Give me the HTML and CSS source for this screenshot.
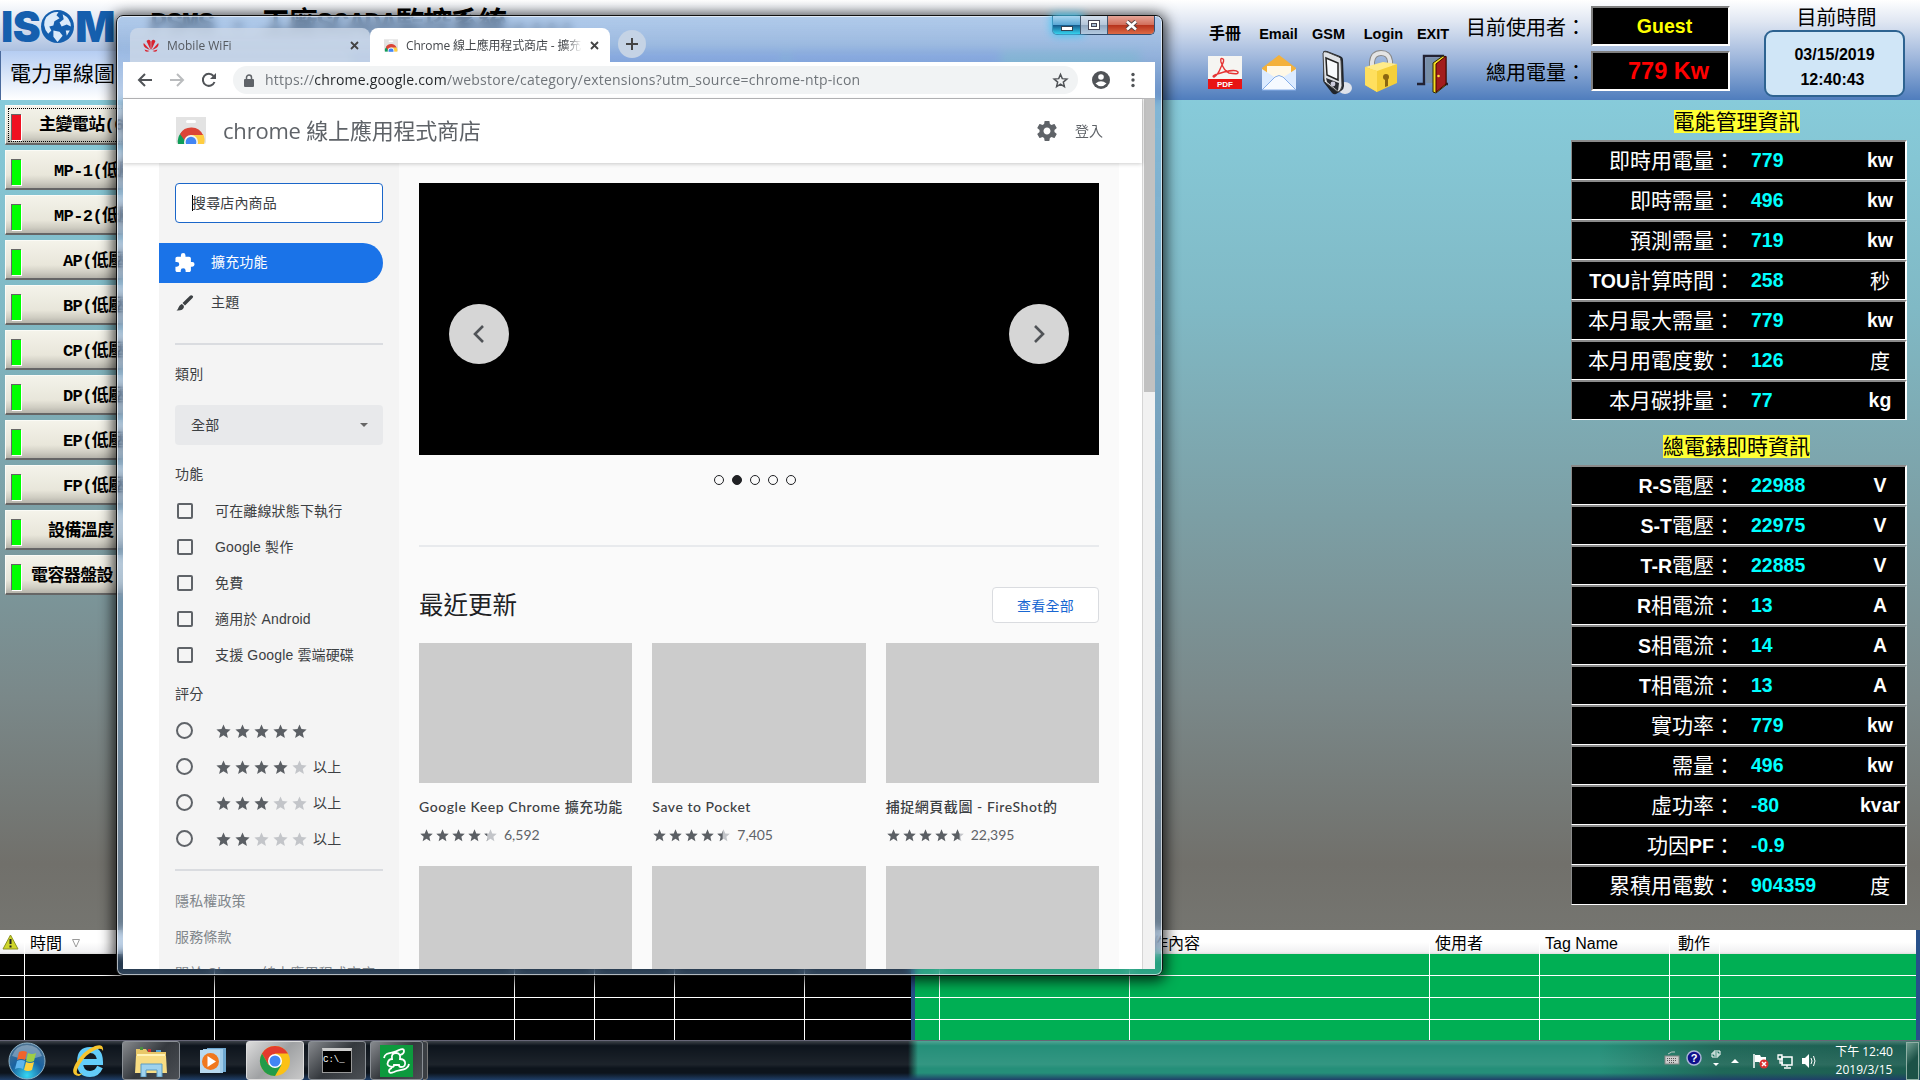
FILE: index.html
```html
<!DOCTYPE html>
<html lang="zh-Hant">
<head>
<meta charset="utf-8">
<title>PSMS - SCADA</title>
<link rel="stylesheet" href="styles.css">
</head>
<body>
<svg class="defs" width="0" height="0" aria-hidden="true">
  <symbol id="star" viewBox="0 0 24 24"><path d="M12 17.3 18.2 21l-1.6-7L22 9.2l-7.2-.6L12 2 9.2 8.6 2 9.2 7.5 14l-1.7 7z"/></symbol>
  <symbol id="webstore" viewBox="0 0 30 27">
    <path fill="#e3e3e3" d="M0 0h30v25a2 2 0 0 1-2 2H2a2 2 0 0 1-2-2z"/>
    <rect x="10" y="3" width="10" height="3" rx="1.5" fill="#fff"/>
    <path fill="#0f9d58" d="M2 27a13 13 0 0 1 4-12l7 12z"/>
    <path fill="#ffcd40" d="M15 17h12a13 13 0 0 1 1 10H15z"/>
    <path fill="#db4437" d="M4 17a13 13 0 0 1 23 1H15l-6 6z"/>
    <circle cx="15" cy="25" r="7" fill="#f1f1f1"/><circle cx="15" cy="25" r="5.3" fill="#4285f4"/>
    <path fill="#fff" d="M0 27h30v5H0z"/>
  </symbol>
</svg>
<div class="desktop">
  <header class="scada-head">
    <div class="brand">
      <div class="brand-top">
        <div class="logo"><span>IS</span>
          <svg width="35" height="35" viewBox="0 0 34 34"><circle cx="17" cy="17" r="16" fill="#155fae"/><path fill="#dcebfa" d="M6 8q6-6 12-5l-2 3 3 3-5 3-1 4-4 1 2 4-3 3Q1 16 6 8zM22 5q8 4 8 12l-4-2-5 2-2-4 4-3zM13 21l6 1 3 4-5 6-4-5zM25 21l4 0-3 5z"/></svg>
          <span>M</span></div>
        <div class="title">PSMS - 工廠SCADA監控系統<small>v1.0.0.2</small></div>
      </div>
      <div class="brand-nav"><span class="nav-on">電力單線圖</span><span class="nav-tab"></span><span class="nav-tab"></span><span class="nav-tab"></span></div>
    </div>
    <div class="tools">
      <div class="tool"><span>手冊</span>
        <svg width="36" height="46" viewBox="0 0 36 46"><rect x="1" y="6" width="34" height="33" fill="#f5f5f2"/><rect x="1" y="29" width="34" height="10" fill="#e81414"/><path d="M16 9q-3-2-2 3 3 9 8 11 10 2 9-1-2-3-14 0-14 4-10 5 4-2 7-10 4-7 2-8z" fill="none" stroke="#e63535" stroke-width="1.4"/><text x="18" y="37" text-anchor="middle" class="pdf">PDF</text></svg></div>
      <div class="tool"><span>Email</span>
        <svg width="36" height="46" viewBox="0 0 36 46"><path fill="#f3b13c" d="M1 18 18 5l17 13v6H1z"/><path fill="#fff8e6" d="M6 16h24v14H6z"/><path fill="#dcebff" d="M1 19l17 11 17-11v21H1z"/><path fill="#f6faff" stroke="#86aee8" d="M1 40l13-13q4-3 8 0l13 13z"/></svg></div>
      <div class="tool"><span>GSM</span>
        <svg class="phone" width="36" height="46" viewBox="0 0 36 46"><ellipse cx="28" cy="38" rx="7" ry="6" fill="#dfe3ea"/><path d="M6 2q1-2 4-1l13 5q3 1 3 4l1 26q0 3-3 5l-5 3q-2 1-4-1L8 34q-2-2-2-4z" fill="#20242a"/><path d="M6 3q1-2 4-1l12 5q2 1 2 4l1 25q-1 5-4 6L9 33q-2-1-2-4z" fill="#dfe2e6" stroke="#444"/><path d="m9 8 12 5v17L10 25z" fill="#f8fafc" stroke="#222" stroke-width="1.5"/><path d="m9 28 13 5-1 8-11-9z" fill="#2a2d33"/><circle cx="16" cy="34" r="2.4" fill="#ccd"/></svg></div>
      <div class="tool login"><span>Login</span>
        <svg width="36" height="46" viewBox="0 0 36 46"><path d="M9 20V12q1-9 9-9t9 8v6" fill="none" stroke="#888" stroke-width="6"/><path d="M9 20V12q1-9 9-9t9 8v6" fill="none" stroke="#e4e4e4" stroke-width="4"/><path d="M2 17 12 20 34 14V33L14 42 2 35z" fill="#f5cf3a"/><path d="M2 17 20 12l14 2-20 7z" fill="#ffeb8a"/><path d="m2 17 12 4v21L2 35z" fill="#ffdf5e"/><circle cx="23" cy="27" r="3" fill="#8a6510"/><path d="m22 28h3v8l-3 1z" fill="#8a6510"/></svg></div>
      <div class="tool"><span>EXIT</span>
        <svg width="36" height="46" viewBox="0 0 36 46"><path d="M2 34h7V6h19v28h5" fill="none" stroke="#223" stroke-width="2.4"/><path fill="#788fa8" d="M11 8h15v25H11z"/><path fill="#f3df24" stroke="#332a00" d="m18 13 10-7 3 1v28l-10 8-3-1z"/><path fill="#a31d1d" stroke="#400" d="m21 14 10-8v28l-10 8z"/><circle cx="23.500" cy="26" r="1.300" fill="#fd4"/></svg></div>
    </div>
    <div class="status">
      <div class="stat"><span class="cjk20">目前使用者：</span><b class="box guest">Guest</b></div>
      <div class="stat"><span class="cjk20">總用電量：</span><b class="box power">779 Kw</b></div>
    </div>
    <div class="clock"><span class="cjk20">目前時間</span><div class="clock-box"><b>03/15/2019</b><b>12:40:43</b></div></div>
  </header>

  <main class="scada-body">
    <nav class="stations">
      <button class="st alarm"><i></i><span style="margin-left:18px">主變電站(69</span></button>
      <button class="st"><i></i><span style="margin-left:33px">MP-1(低壓</span></button>
      <button class="st"><i></i><span style="margin-left:33px">MP-2(低壓</span></button>
      <button class="st"><i></i><span style="margin-left:42px">AP(低壓)</span></button>
      <button class="st"><i></i><span style="margin-left:42px">BP(低壓)</span></button>
      <button class="st"><i></i><span style="margin-left:42px">CP(低壓)</span></button>
      <button class="st"><i></i><span style="margin-left:42px">DP(低壓)</span></button>
      <button class="st"><i></i><span style="margin-left:42px">EP(低壓)</span></button>
      <button class="st"><i></i><span style="margin-left:42px">FP(低壓)</span></button>
      <button class="st"><i></i><span style="margin-left:27px">設備溫度</span></button>
      <button class="st"><i></i><span style="margin-left:10px">電容器盤設</span></button>
    </nav>
    <aside class="readings">
      <h2>電能管理資訊</h2>
      <div class="meter">
        <div class="row"><span>即時用電量：</span><b>779</b><em>kw</em></div>
        <div class="row"><span>即時需量：</span><b>496</b><em>kw</em></div>
        <div class="row"><span>預測需量：</span><b>719</b><em>kw</em></div>
        <div class="row"><span><b>TOU</b>計算時間：</span><b>258</b><em class="zh">秒</em></div>
        <div class="row"><span>本月最大需量：</span><b>779</b><em>kw</em></div>
        <div class="row"><span>本月用電度數：</span><b>126</b><em class="zh">度</em></div>
        <div class="row"><span>本月碳排量：</span><b>77</b><em>kg</em></div>
      </div>
      <h2>總電錶即時資訊</h2>
      <div class="meter">
        <div class="row"><span><b>R-S</b>電壓：</span><b>22988</b><em>V</em></div>
        <div class="row"><span><b>S-T</b>電壓：</span><b>22975</b><em>V</em></div>
        <div class="row"><span><b>T-R</b>電壓：</span><b>22885</b><em>V</em></div>
        <div class="row"><span><b>R</b>相電流：</span><b>13</b><em>A</em></div>
        <div class="row"><span><b>S</b>相電流：</span><b>14</b><em>A</em></div>
        <div class="row"><span><b>T</b>相電流：</span><b>13</b><em>A</em></div>
        <div class="row"><span>實功率：</span><b>779</b><em>kw</em></div>
        <div class="row"><span>需量：</span><b>496</b><em>kw</em></div>
        <div class="row"><span>虛功率：</span><b>-80</b><em>kvar</em></div>
        <div class="row"><span>功因<b>PF</b>：</span><b>-0.9</b><em></em></div>
        <div class="row"><span>累積用電數：</span><b>904359</b><em class="zh">度</em></div>
      </div>
    </aside>
  </main>

  <section class="logs">
    <div class="log alarms">
      <div><svg width="17" height="16" viewBox="0 0 17 16"><path d="M8.500 1 16 15H1z" fill="#cfd62a" stroke="#8d9422" stroke-linejoin="round"/><path d="M7.500 5h2v5h-2zM7.500 11.500h2v2h-2z" fill="#222"/></svg></div>
      <div>時間<svg class="sort" width="8" height="9" viewBox="0 0 8 9"><path d="M.5.500h7L4 8z" fill="#fff" stroke="#999"/></svg></div>
      <div></div><div></div><div></div><div></div><div></div>
    </div>
    <div class="log events">
      <div></div><div></div><div>操作內容</div><div>使用者</div><div>Tag Name</div><div>動作</div><div></div>
    </div>
  </section>

  <footer class="taskbar">
    <div class="launch">
      <div class="tb orb"><svg width="38" height="38" viewBox="0 0 38 38"><defs><radialGradient id="og" cx=".5" cy=".9" r=".9"><stop offset="0" stop-color="#35d6f2"/><stop offset=".5" stop-color="#1a62a0"/><stop offset="1" stop-color="#4d7290"/></radialGradient></defs><circle cx="19" cy="19" r="18" fill="url(#og)" stroke="#8fb4c9"/><path d="M4 14Q8 3 19 3t15 11q-15 6-30 0z" fill="#fff" opacity=".3"/><path fill="#f0642c" d="M11 10q4-2 8 0l-2 8q-4-2-8 0z"/><path fill="#9fce45" d="M20 11q4 2 8 0l-2 8q-4 2-8 0z"/><path fill="#5fb5ee" d="M9 19q4-2 8 0l-2 8q-4-2-8 0z"/><path fill="#ffd23e" d="M18 20q4 2 8 0l-2 8q-4 2-8 0z"/></svg></div>
      <div class="tb ie"><svg width="34" height="34" viewBox="0 0 34 34"><path d="M28 23q-3 7-10 7-10 0-10-12T18 6q10 0 10 12H9" fill="none" stroke="#63cdfa" stroke-width="6"/><path d="M7 32Q-3 31 4 19 11 7 23 2q9-3 8 5-1-4-8-1-9 4-15 14T7 30q2 0 4-1-2 2-4 3z" fill="#f6c42d"/></svg></div>
      <div class="tb btn"><svg width="34" height="32" viewBox="0 0 34 32"><path fill="#e9c868" d="M2 4h10l2 3h18v21H2z"/><path fill="#fff3b8" d="M3 9h28v18H3z"/><path fill="#f7dc83" d="M2 11h30l1 17H1z"/><path fill="#4b8e3f" d="M6 2h3v3H6z"/><path fill="#c33" d="M14 4h3v3h-3z"/><path fill="#57a7d8" d="M22 5h5v2h-5z"/><path d="M7 32V19h21v13h-5v-7H12v7z" fill="#9ed2ee" stroke="#5b9cc4"/></svg></div>
      <div class="tb"><svg width="28" height="28" viewBox="0 0 28 28"><path fill="#6ea7cf" d="M8 1h19v24H8z"/><path fill="#9fcbe8" d="M4 2h20v24H4z"/><path fill="#b9daef" d="M1 3h20v23H1z"/><circle cx="11.500" cy="14.500" r="8.500" fill="#f0781e"/><path fill="#fff" d="m8.500 9 8.500 5.500L8.500 20z"/></svg></div>
      <div class="tb btn on"><svg width="32" height="32" viewBox="0 0 32 32"><circle cx="16" cy="16" r="15" fill="#fbc116"/><path fill="#e33b2e" d="M3 8.500A15 15 0 0 1 29 8.500H16L9 16z"/><path fill="#e33b2e" d="M3 8.500 9.500 20 16 9z"/><path fill="#229b49" d="M3 8.500A15 15 0 0 0 16 31l6.500-11.300L9.500 20z"/><circle cx="16" cy="16" r="7" fill="#fff"/><circle cx="16" cy="16" r="5.500" fill="#4285f4"/></svg></div>
      <div class="tb btn"><div class="cmd">C:\_</div></div>
      <div class="tb btn green"><svg width="33" height="32" viewBox="0 0 33 32"><rect width="33" height="32" fill="#0d9a3d"/><path d="M4 13C5 6 14 9 19 5q5-2 5 1t-4 4M29 19c-1 7-10 5-15 8q-5 2-5-1 0-2 3-3M12 22q-6-1-4-5 1-3 4-3-1-6 4-6t4 6q4 0 5 3 1 5-4 5-2 0-2-2h-5q0 2-2 2z" fill="none" stroke="#fff" stroke-width="1.800"/></svg></div><span class="stack"></span>
    </div>
    <div class="tray">
      <svg width="16" height="16" viewBox="0 0 16 16"><path d="M4 4q4-3 7-2" stroke="#b9c9c4" fill="none"/><rect x="1" y="6" width="14" height="8" fill="#ccc" stroke="#888"/><path d="M3 8.500h10M3 10.500h10M5 12.500h6" stroke="#555" stroke-dasharray="1 1"/></svg>
      <svg width="16" height="16" viewBox="0 0 16 16"><circle cx="8" cy="8" r="7" fill="#10108c" stroke="#aab4d8" stroke-width="1.500"/><text x="8" y="12" text-anchor="middle" class="help">?</text></svg>
      <svg width="10" height="20" viewBox="0 0 10 20"><path d="M3 3h6v4H3zM1 5h6v4H1z" fill="#1f7360" stroke="#fff"/><path d="M2 15h6L5 18z" fill="#fff"/></svg>
      <svg width="10" height="6" viewBox="0 0 10 6"><path d="m1 5 4-4 4 4z" fill="#fff"/></svg>
      <svg width="16" height="16" viewBox="0 0 16 16"><path d="M1 1v14" stroke="#fff" stroke-width="1.500"/><path d="M2 2h5l1 2h5v6H7L6 9H2z" fill="#fff"/><circle cx="11" cy="11" r="4.500" fill="#d93030"/><path d="m9 9 4 4m0-4-4 4" stroke="#fff" stroke-width="1.500"/></svg>
      <svg width="16" height="16" viewBox="0 0 16 16"><path d="M5 4h10v8H5z" fill="#1f6b5a" stroke="#fff" stroke-width="1.500"/><path d="M1 2h4v4H1zM3 6v4h3M10 12v2M7 15h7" stroke="#fff" fill="none" stroke-width="1.300"/></svg>
      <svg width="16" height="16" viewBox="0 0 16 16"><path fill="#fff" d="M1 5h3l4-4v14l-4-4H1z"/><path d="M10 5q2 3 0 6M12.500 3q3 5 0 10" fill="none" stroke="#fff"/></svg>
      <div class="time"><span>下午 12:40</span><span>2019/3/15</span></div>
      <div class="peek"></div>
    </div>
  </footer>

  <div class="window">
    <div class="caption">
      <div class="tabs">
        <div class="tab"><svg width="16" height="14" viewBox="0 0 16 14"><path fill="#d8232f" d="M7.700 11 3.500 2q3-2.500 4.200.5zM8.300 11l4.200-9q-3-2.500-4.200.5zM7 11 .8 4Q-1 8.500 7 11zM9 11l6.200-7Q17 8.500 9 11zM6.500 12 1.500 10.500q1 3.500 5 1.500zM9.500 12l5-1.500q-1 3.500-5 1.500z"/></svg><span>Mobile WiFi</span><svg class="x" width="9" height="9" viewBox="0 0 9 9"><path d="m1 1 7 7m0-7L1 8"/></svg></div>
        <div class="tab active"><svg width="14" height="13"><use href="#webstore"/></svg><span>Chrome 線上應用程式商店 - 擴充</span><svg class="x" width="9" height="9" viewBox="0 0 9 9"><path d="m1 1 7 7m0-7L1 8"/></svg></div>
        <div class="plus"><svg width="12" height="12" viewBox="0 0 12 12"><path d="M6 0v12M0 6h12" stroke="#444" stroke-width="2"/></svg></div>
      </div>
      <div class="controls">
        <div class="min"><svg width="14" height="8" viewBox="0 0 14 8"><rect x="1.500" y="2.500" width="11" height="4" fill="#fff" stroke="#345"/></svg></div>
        <div class="max"><svg width="14" height="12" viewBox="0 0 14 12"><rect x="1.500" y="1.500" width="11" height="9" fill="#fff" stroke="#445"/><rect x="4.500" y="4.500" width="5" height="3" fill="#a9bdd3" stroke="#445"/></svg></div>
        <div class="close"><svg width="13" height="11" viewBox="0 0 13 11"><path d="m2 1.500 9 8m0-8-9 8" stroke="#544" stroke-width="4.500"/><path d="m2 1.500 9 8m0-8-9 8" stroke="#fff" stroke-width="2.600"/></svg></div>
      </div>
    </div>
    <div class="client">
      <div class="toolbar">
        <svg width="16" height="16" viewBox="0 0 16 16"><path d="M15 8H2M8 2 2 8l6 6" fill="none" stroke="#505357" stroke-width="2"/></svg>
        <svg width="16" height="16" viewBox="0 0 16 16"><path d="M1 8h13M8 2l6 6-6 6" fill="none" stroke="#babcbe" stroke-width="2"/></svg>
        <svg width="16" height="16" viewBox="0 0 16 16"><path d="M13.500 10A6 6 0 1 1 12.500 4" fill="none" stroke="#505357" stroke-width="2"/><path d="M15 1v6H9z" fill="#505357"/></svg>
        <div class="omni"><svg width="10" height="13" viewBox="0 0 10 13"><path d="M2.500 6V3.500a2.500 2.500 0 0 1 5 0V6" fill="none" stroke="#5f6368" stroke-width="1.500"/><rect x="0" y="5" width="10" height="8" rx="1" fill="#5f6368"/></svg><p>https://<b>chrome.google.com</b>/webstore/category/extensions?utm_source=chrome-ntp-icon</p><svg width="17" height="17" viewBox="0 0 24 24"><path d="M12 17 17.500 20.500l-1.500-6.300 5-4.200-6.500-.6L12 3.500 9.500 9.400 3 10l5 4.200-1.500 6.300z" fill="none" stroke="#505357" stroke-width="2.100"/></svg></div>
        <svg class="profile" width="18" height="18" viewBox="0 0 18 18"><circle cx="9" cy="9" r="9" fill="#505357"/><circle cx="9" cy="6" r="2.800" fill="#fff"/><path d="M3.500 12.500q5.500-4.500 11 0Q9 18 3.500 12.500z" fill="#fff"/></svg>
        <svg width="4" height="16" viewBox="0 0 4 16"><g fill="#505357"><circle cx="2" cy="2.500" r="1.700"/><circle cx="2" cy="8" r="1.700"/><circle cx="2" cy="13.500" r="1.700"/></g></svg>
      </div>
      <div class="view">
        <div class="page">
          <div class="store-head"><svg width="30" height="27"><use href="#webstore"/></svg><h1>chrome 線上應用程式商店</h1>
            <svg width="20" height="20" viewBox="2 2 20 20"><path fill="#5f6368" d="M19.430 12.980c.04-.32.070-.64.070-.98s-.03-.66-.07-.98l2.110-1.650c.19-.15.240-.42.120-.64l-2-3.460c-.12-.22-.39-.3-.61-.22l-2.490 1c-.52-.4-1.080-.73-1.690-.98l-.38-2.650C14.460 2.180 14.250 2 14 2h-4c-.25 0-.46.180-.49.420l-.38 2.650c-.61.250-1.170.590-1.690.980l-2.490-1c-.23-.09-.49 0-.61.220l-2 3.460c-.13.220-.07.490.12.640l2.110 1.650c-.04.320-.07.650-.07.980s.03.660.07.980l-2.110 1.650c-.19.150-.24.420-.12.640l2 3.460c.12.220.39.300.61.220l2.490-1c.52.400 1.080.730 1.690.980l.38 2.650c.03.240.240.420.490.420h4c.25 0 .46-.18.490-.42l.38-2.650c.61-.25 1.170-.59 1.690-.98l2.490 1c.23.090.490 0 .61-.22l2-3.460c.12-.22.070-.49-.12-.64l-2.110-1.650zM12 15.500c-1.930 0-3.500-1.570-3.500-3.500s1.570-3.500 3.500-3.500 3.500 1.570 3.500 3.500-1.570 3.500-3.500 3.500z"/></svg>
            <span>登入</span></div>
          <div class="cols">
            <aside class="side">
              <div class="search"><i></i>搜尋店內商品</div>
              <div class="pill"><svg width="20" height="20" viewBox="2 1 21 22"><path fill="#fff" d="M20.500 11H19V7c0-1.100-.9-2-2-2h-4V3.500a2.500 2.500 0 0 0-5 0V5H4c-1.100 0-2 .9-2 2v3.800h1.500a2.700 2.700 0 0 1 0 5.400H2V20c0 1.100.9 2 2 2h3.800v-1.500a2.700 2.700 0 0 1 5.400 0V22H17c1.100 0 2-.9 2-2v-4h1.500a2.500 2.500 0 0 0 0-5z"/></svg><span>擴充功能</span></div>
              <div class="theme"><svg width="18" height="16" viewBox="0 0 18 16"><path fill="#3c4043" d="M16 .500q2 1 .5 2.500L9 10.500 6.500 8 14 .8q1-1 2-.3zM5.500 9Q8 9.500 8 12q-1 4-7.500 3.500 1.500-1 2-3T5.500 9z"/></svg><span>主題</span></div>
              <hr>
              <h3 class="cat">類別</h3>
              <div class="select">全部<i></i></div>
              <h3 class="feat">功能</h3>
              <label><i class="cb"></i>可在離線狀態下執行</label>
              <label><i class="cb"></i>Google 製作</label>
              <label><i class="cb"></i>免費</label>
              <label><i class="cb"></i>適用於 Android</label>
              <label><i class="cb"></i>支援 Google 雲端硬碟</label>
              <h3 class="rate">評分</h3>
              <label><i class="rb"></i><span class="stars"><svg><use href="#star"/></svg><svg><use href="#star"/></svg><svg><use href="#star"/></svg><svg><use href="#star"/></svg><svg><use href="#star"/></svg></span></label>
              <label><i class="rb"></i><span class="stars"><svg><use href="#star"/></svg><svg><use href="#star"/></svg><svg><use href="#star"/></svg><svg><use href="#star"/></svg><svg class="off"><use href="#star"/></svg></span>以上</label>
              <label><i class="rb"></i><span class="stars"><svg><use href="#star"/></svg><svg><use href="#star"/></svg><svg><use href="#star"/></svg><svg class="off"><use href="#star"/></svg><svg class="off"><use href="#star"/></svg></span>以上</label>
              <label><i class="rb"></i><span class="stars"><svg><use href="#star"/></svg><svg><use href="#star"/></svg><svg class="off"><use href="#star"/></svg><svg class="off"><use href="#star"/></svg><svg class="off"><use href="#star"/></svg></span>以上</label>
              <hr class="low">
              <a>隱私權政策</a><a>服務條款</a><a>關於 Chrome 線上應用程式商店</a>
            </aside>
            <div class="main">
              <div class="hero"><div class="arrow"><svg width="14" height="20" viewBox="0 0 14 20"><path d="m11 2-8 8 8 8" fill="none" stroke="#505357" stroke-width="2.600"/></svg></div><div class="arrow"><svg width="14" height="20" viewBox="0 0 14 20"><path d="m3 2 8 8-8 8" fill="none" stroke="#505357" stroke-width="2.600"/></svg></div></div>
              <div class="dots"><i></i><i class="now"></i><i></i><i></i><i></i></div>
              <hr>
              <div class="sec"><h2>最近更新</h2><div class="all">查看全部</div></div>
              <div class="cards">
                <div class="card"><div class="ph"></div><h4>Google Keep Chrome 擴充功能</h4><p><span class="stars sm"><svg><use href="#star"/></svg><svg><use href="#star"/></svg><svg><use href="#star"/></svg><svg><use href="#star"/></svg><span class="part p20"><svg class="off"><use href="#star"/></svg><svg class="cut"><use href="#star"/></svg></span></span>6,592</p></div>
                <div class="card"><div class="ph"></div><h4>Save to Pocket</h4><p><span class="stars sm"><svg><use href="#star"/></svg><svg><use href="#star"/></svg><svg><use href="#star"/></svg><svg><use href="#star"/></svg><span class="part p40"><svg class="off"><use href="#star"/></svg><svg class="cut"><use href="#star"/></svg></span></span>7,405</p></div>
                <div class="card"><div class="ph"></div><h4>捕捉網頁截圖 - FireShot的</h4><p><span class="stars sm"><svg><use href="#star"/></svg><svg><use href="#star"/></svg><svg><use href="#star"/></svg><svg><use href="#star"/></svg><span class="part p70"><svg class="off"><use href="#star"/></svg><svg class="cut"><use href="#star"/></svg></span></span>22,395</p></div>
                <div class="card"><div class="ph"></div></div><div class="card"><div class="ph"></div></div><div class="card"><div class="ph"></div></div>
              </div>
            </div>
          </div>
        </div>
        <div class="scroll"><div class="thumb"></div></div>
      </div>
    </div>
  </div>
</div>
</body>
</html>
```
FILE: styles.css
```css
* { box-sizing: border-box; }
body { margin: 0; overflow: hidden; font-family: "Liberation Sans", "Noto Sans CJK TC", sans-serif; color: #000; }
h1, h2, h3, h4, p { margin: 0; font-weight: 400; }
svg { display: block; flex: none; }
.defs { position: absolute; }
.desktop { position: relative; width: 1920px; height: 1080px; overflow: hidden; display: flex; flex-direction: column; background: #27508a; }

/* SCADA header */
.scada-head { height: 100px; display: flex; background: linear-gradient(#fff 0%, #dfe6f2 22%, #9fb7dc 58%, #4f7dbd 100%); }
.brand { width: 1198px; }
.brand-top { height: 51px; display: flex; }
.logo { display: flex; align-items: center; width: 150px; padding: 2px 0 0 1px; color: #155fae; font: 900 42px/50px Inter, sans-serif; letter-spacing: -.5px; }
.title { font: 700 29px/44px "Liberation Mono", "Noto Sans CJK TC", monospace; letter-spacing: -1.500px; white-space: nowrap; padding-top: 4px; }
.title small { font-size: 15px; margin-left: 4px; }
.brand-nav { width: 1140px; height: 49px; display: flex; background: #84c0d0; }
.nav-on { width: 350px; padding-left: 9px; font-size: 21px; line-height: 46px; background: linear-gradient(#b5cdf2, #fff); border-left: 1px solid #4a6a9c; white-space: nowrap; }
.nav-tab { width: 213px; margin-left: 4px; background: #88a6e4; }
.tools { display: grid; grid-template-columns: 54px 53px 47px 58px 46px; padding-top: 24px; }
.tool { display: flex; flex-direction: column; align-items: center; font-weight: 700; font-size: 14.500px; line-height: 20px; }
.tool svg { margin-top: 6px; }
.tool .phone { margin-left: 12px; }
.login span { margin-left: 5px; }
.tool:first-child span { font-size: 16px; }
.pdf { font: 700 8px "Liberation Sans", sans-serif; fill: #fff; }
.status { width: 274px; padding-top: 6px; display: flex; flex-direction: column; gap: 5px; }
.stat { display: flex; justify-content: flex-end; align-items: center; gap: 5px; }
.stat .cjk20 { padding-top: 3px; }
.cjk20 { font-size: 20px; line-height: 24px; white-space: nowrap; }
.box { width: 139px; height: 40px; background: #000; border: 2px solid #808080; border-right-color: #fff; border-bottom-color: #fff; text-align: center; line-height: 37px; }
.guest { color: #ff0; font-size: 19.500px; padding-left: 8px; }
.power { color: #f00; font-size: 23.500px; padding-left: 16px; line-height: 36px; }
.clock { width: 141px; margin-left: 34px; padding-top: 6px; display: flex; flex-direction: column; align-items: center; }
.clock .cjk20 { margin-right: -4px; }
.clock-box { width: 141px; height: 67px; border: 2px solid #2d6391; border-radius: 9px; background: #d0e6f7; display: flex; flex-direction: column; align-items: center; font-size: 16px; line-height: 25px; padding-top: 10px; }
.clock-box b + b { margin-right: 4px; }

/* SCADA body */
.scada-body { height: 830px; display: flex; justify-content: space-between; background: linear-gradient(#87cbda 0%, #80b9c5 25%, #7c9fa5 50%, #7a8889 72%, #71706b 92%, #757570); }
.stations { display: flex; flex-direction: column; gap: 5px; padding: 5px 0 0 5px; }
.st { width: 230px; height: 40px; margin: 0; padding: 4px 0 0 5px; display: flex; align-items: center; border: 2px solid #fbfbf6; border-right-color: #666; border-bottom-color: #666; border-width: 1px 1px 2px 1px; background: linear-gradient(#f4f3ea, #e8e6da 65%, #cfcdc2 85%, #b5b3aa); color: #000; font: 700 17px/20px "Liberation Mono", "Noto Sans CJK TC", monospace; letter-spacing: -.6px; text-align: left; white-space: nowrap; }
.st i { width: 10px; height: 26px; background: #0f0; border: 2px solid #666; border-width: 1px 0 0 1px; box-shadow: 1px 1px #fff; }
.st.alarm i { background: #f01020; }
.st.alarm { outline: 1px dotted #000; outline-offset: -4px; }
.st.alarm span { padding-bottom: 2px; }
.readings { width: 336px; margin-right: 13px; padding-top: 10px; display: flex; flex-direction: column; align-items: center; }
.readings h2 { font-size: 21px; line-height: 24px; height: 23px; background: #ff3; margin-right: 5px; white-space: nowrap; }
.meter { width: 336px; margin: 7px 0 15px; }
.row { height: 40px; display: grid; grid-template-columns: 163px 16px 1fr 50px; background: #000; border: 2px solid #8a8a8a; border-left-width: 1px; border-right-color: #fff; border-bottom-color: #fff; border-bottom-width: 1px; color: #fff; font-size: 21px; line-height: 38px; white-space: nowrap; }
.row span { text-align: right; }
.row span b { font-size: 19.500px; }
.row > b { grid-column: 3; color: #0ff; font-size: 19.500px; line-height: 37px; }
.row em { font: 700 19.500px/37px "Liberation Sans", sans-serif; display: flex; justify-content: center; }
.row em.zh { font: 400 20px/38px "Noto Sans CJK TC", sans-serif; }

/* event lists */
.logs { height: 110px; display: flex; gap: 4px; }
.log { display: grid; height: 110px; }
.log > div { border-right: 1px solid #fff; padding: 4px 0 0 5px; font-size: 16px; line-height: 20px; white-space: nowrap; display: flex; align-items: flex-start; }
.log > div:last-child { border-right: 0; }
.alarms { width: 911px; grid-template-columns: 25px 190px 300px 80px 80px 130px 1fr; background: linear-gradient(#fff, #fff 12px, #f0f0f2 22px, #ddd 24px, transparent 24px), repeating-linear-gradient(transparent 0 21px, #fff 21px 22px) 0 24px no-repeat, #000; }
.events { width: 1001px; grid-template-columns: 25px 190px 300px 110px 130px 50px 1fr; background: linear-gradient(#fff, #fff 12px, #f0f0f2 22px, #ddd 24px, transparent 24px), repeating-linear-gradient(transparent 0 21px, #fff 21px 22px) 0 24px no-repeat, #00af54; }
.log > div:first-child { padding-left: 2px; }
.sort { margin: 5px 0 0 10px; }
.events > div:nth-child(3) { padding-left: 6px; }
.events > div:nth-child(6) { padding-left: 8px; }

/* taskbar */
.taskbar { height: 40px; display: flex; justify-content: space-between; border-top: 1px solid #667; background: linear-gradient(transparent 82%, #1f3f68), linear-gradient(#fff3, #fff0 12%, #fff1 60%, #fff0 70%), linear-gradient(90deg, #0d141c 908px, #258f79 918px, #258f79 1600px, #1f6858 1720px, #1d5c50); }
.launch { display: flex; align-items: center; padding-left: 0; }
.tb { width: 58px; height: 39px; display: flex; align-items: center; justify-content: center; margin-right: 4px; }
.orb { width: 54px; margin: 0; }
.ie { width: 64px; padding-left: 6px; }
.btn { border: 1px solid #8b9096; border-radius: 3px; background: linear-gradient(135deg, #878a8e, #34383d 50%, #4b4f54); }
.btn.on { background: linear-gradient(135deg, #dcdcdc, #9fa1a3 50%, #c8c8c8); border-color: #ddd; }
.cmd { width: 30px; height: 25px; padding-top: 4px; background: #000; border: 1px solid #999; border-top: 3px solid #ccc; color: #fff; font: 9px/10px "Liberation Mono", monospace; }
.green { width: 53px; margin: 0; }
.stack { width: 5px; height: 39px; border: 1px solid #777; border-left: 0; border-radius: 0 3px 3px 0; background: #3a3e43; }
.tray { display: flex; align-items: center; color: #fff; }
.tray svg:nth-child(1) { margin: -6px 6px 0 0; }
.tray svg:nth-child(2) { margin: -6px 9px 0 0; }
.tray svg:nth-child(3) { margin: -6px 9px 0 0; }
.tray svg:nth-child(4) { margin-right: 13px; }
.tray svg:nth-child(5), .tray svg:nth-child(6) { margin-right: 8px; }
.help { font: 700 11px "Liberation Sans", sans-serif; fill: #fff; }
.time { width: 89px; padding-left: 5px; display: flex; flex-direction: column; align-items: center; font: 12px/18px "Open Sans", "Noto Sans CJK TC", sans-serif; }
.peek { width: 13px; height: 38px; margin-right: 1px; border: 1px solid #8fb0a5; background: linear-gradient(135deg, #6f9d90, #1c5247 50%); }

/* browser window */
.window { position: absolute; left: 116px; top: 15px; width: 1047px; height: 961px; border: 1px solid #111; border-radius: 7px; padding: 0 7px 6px 6px; box-shadow: 0 2px 14px 3px rgba(0,0,0,.75), inset 0 0 0 1px #ffffffa0; background: linear-gradient(#8fb6e4a0, #7ea3d280 60px, #5b8cc066); backdrop-filter: blur(5px); display: flex; flex-direction: column; }
.caption { height: 46px; display: flex; justify-content: space-between; }
.tabs { display: flex; align-items: flex-end; padding-left: 7px; font: 12px/18px "Open Sans", "Noto Sans CJK TC", sans-serif; color: #555a60; }
.tab { width: 240px; height: 34px; display: flex; align-items: center; padding: 1px 11px 0 13px; border-radius: 8px 8px 0 0; background: #cdd8e7cc; }
.tab.active { background: #fff; color: #45484c; padding-left: 14px; }
.tab span { flex: 1; margin: 0 8px 0 8px; overflow: hidden; white-space: nowrap; }
.tab.active span { letter-spacing: -.15px; -webkit-mask-image: linear-gradient(90deg, #000 90%, transparent); mask-image: linear-gradient(90deg, #000 90%, transparent); }
.x { stroke: #444; stroke-width: 1.800; }
.plus { width: 28px; height: 28px; border-radius: 50%; background: #c5d3e5; display: flex; align-items: center; justify-content: center; margin: 0 0 4px 8px; }
.controls { display: flex; height: 19px; border: 1px solid #334e70; border-top: 0; border-radius: 0 0 5px 5px; }
.controls div { display: flex; align-items: center; justify-content: center; height: 18px; border-right: 1px solid #44586f; }
.controls .min { width: 28px; background: linear-gradient(#a9d6f0, #5ba8d6 48%, #14598d 50%, #35d2ee); box-shadow: 0 0 9px 2px #44c8f5; border-radius: 0 0 0 4px; padding-top: 6px; }
.controls .max { width: 27px; background: linear-gradient(#d4dfec, #b5c6da 48%, #8fa5be 50%, #b4cae0); position: relative; }
.controls .close { width: 46px; background: linear-gradient(#e6a598, #d2705c 48%, #b5311a 50%, #dd6a45); border-right: 0; border-radius: 0 0 4px 0; }
.client { flex: 1; min-height: 0; display: flex; flex-direction: column; background: #fff; }
.toolbar { height: 37px; display: flex; align-items: center; padding: 0 20px 0 14px; gap: 16px; border-bottom: 1px solid #b9b9bb; }
.toolbar .profile { margin: 0 5px 0 -2px; }
.omni { flex: 1; height: 28px; border-radius: 14px; background: #f1f3f4; display: flex; align-items: center; padding: 0 9px 0 11px; gap: 11px; }
.omni p { flex: 1; font: 14px/20px "Open Sans", sans-serif; letter-spacing: .2px; color: #70757a; white-space: nowrap; }
.omni b { font-weight: 400; color: #25282b; }
.view { flex: 1; min-height: 0; display: flex; }
.page { flex: 1; display: flex; flex-direction: column; min-height: 0; }
.store-head { height: 64px; display: flex; align-items: center; padding: 0 39px 1px 53px; color: #5f6368; box-shadow: 0 1px 4px #0003; z-index: 1; font-size: 14px; }
.store-head h1 { flex: 1; margin: -2px 0 0 17px; font: 22px/30px "Open Sans", "Noto Sans CJK TC", sans-serif; letter-spacing: -.2px; }
.store-head span { margin: -1px 0 0 18px; }
.cols { flex: 1; min-height: 0; display: flex; padding-left: 36px; overflow: hidden; }
.side { width: 240px; background: #f4f4f4; padding: 20px 16px 0 0; color: #3c4043; font-size: 14px; line-height: 20px; letter-spacing: .15px; white-space: nowrap; }
.side > * { margin-left: 16px; }
.search { height: 40px; border: 1px solid #1a66c9; border-radius: 4px; background: #fff; display: flex; align-items: center; padding-left: 16px; }
.search i { width: 1px; height: 16px; margin-right: -1px; background: #000; }
.side .pill { height: 40px; margin: 20px 0 0; border-radius: 0 20px 20px 0; background: #1a73e8; color: #fff; display: flex; align-items: center; padding-left: 16px; }
.pill span, .theme span { margin: -2px 0 0 16px; }
.theme { height: 40px; display: flex; align-items: center; padding-left: 1px; }
.theme span { margin-left: 17px; }
hr { height: 2px; border: 0; background: #dadce0; margin: 20px 0 0 16px; }
h3 { font-size: 14px; height: 20px; }
.cat { margin-top: 19px; }
.select { height: 40px; margin-top: 21px; background: #e8e9eb; border-radius: 4px; display: flex; align-items: center; justify-content: space-between; padding: 0 15px 0 16px; }
.select i { border: 4px solid transparent; border-top-color: #666; border-bottom: 0; }
.feat { margin-top: 19px; margin-bottom: 9px; }
.side label { height: 36px; display: flex; align-items: center; padding-left: 2px; }
.cb { width: 16px; height: 16px; border: 2px solid #5f6368; border-radius: 2px; margin-right: 22px; }
.rb { width: 17px; height: 17px; border: 2px solid #5f6368; border-radius: 50%; margin: -1px 22px 0 -1px; }
.rate { margin-top: 11px; margin-bottom: 9px; }
.stars { display: flex; gap: 2px; fill: #5b5f64; margin-right: 5px; }
.stars svg { width: 17px; height: 17px; }
.stars .off { fill: #c3c5c9; }
.side .low { margin-top: 12px; }
.side a { display: block; height: 36px; line-height: 36px; color: #80868b; }
.low + a { margin-top: 12px; }
.main { flex: 1; background: #fafafa; padding: 20px 20px 0; margin-right: 23px; }
.main hr { margin: 60px 0 0; background: #e8eaed; }
.hero { height: 272px; background: #000; display: flex; align-items: center; justify-content: space-between; padding: 30px 30px 0; }
.arrow { width: 60px; height: 60px; border-radius: 50%; background: #d6d6d6; display: flex; align-items: center; justify-content: center; }
.dots { display: flex; justify-content: center; gap: 8px; margin-top: 20px; padding-right: 8px; }
.dots i { width: 10px; height: 10px; border: 1px solid #202124; border-radius: 50%; }
.dots .now { background: #202124; }
.sec { display: flex; align-items: center; justify-content: space-between; margin-top: 40px; height: 36px; color: #202124; }
.sec h2 { font-size: 24.500px; padding-bottom: 3px; }
.all { width: 107px; height: 36px; border: 1px solid #dadce0; border-radius: 4px; background: #fff; color: #1967d2; font-size: 14px; letter-spacing: .2px; text-align: center; line-height: 36px; }
.cards { display: grid; grid-template-columns: repeat(3, 1fr); gap: 0 20px; margin-top: 20px; grid-template-rows: 223px 223px; }
.ph { height: 140px; background: #ccc; }
.card h4 { font: 500 14px/20px Lato, "Noto Sans CJK TC", sans-serif; letter-spacing: .55px; color: #3c4043; margin-top: 14px; white-space: nowrap; }
.card p { display: flex; align-items: center; margin-top: 8px; height: 20px; color: #5f6368; font: 14px/20px Lato, sans-serif; }
.sm { gap: 1px; margin-right: 6px; }
.sm svg { width: 15px; height: 15px; }
.part { position: relative; }
.cut { position: absolute; left: 0; top: 0; }
.p20 .cut { clip-path: inset(0 72% 0 0); }
.p40 .cut { clip-path: inset(0 58% 0 0); }
.p70 .cut { clip-path: inset(0 34% 0 0); }
.scroll { width: 13px; background: #f1f1f1; border-left: 1px solid #d5d5d5; padding-left: 1px; }
.thumb { height: 293px; background: #c1c1c1; }
```
